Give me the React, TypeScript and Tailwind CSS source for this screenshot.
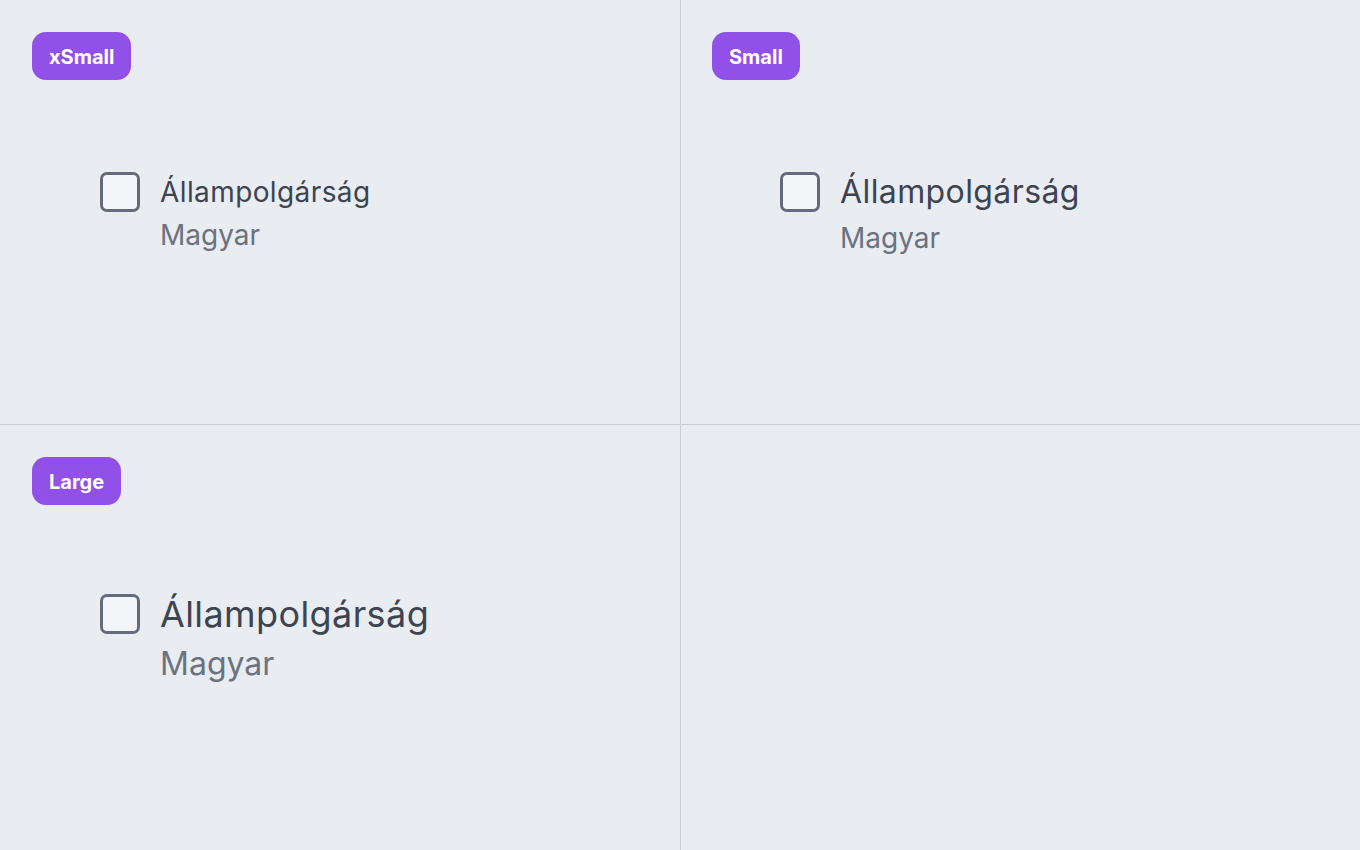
import React from 'react';

type Size = 'xSmall' | 'Small' | 'Large';

const sizes: Record<Size, { title: string; sub: string; gap: string; top: string }> = {
  xSmall: { title: 'text-[28px] leading-[40px]', sub: 'text-[28px] leading-[36px]', gap: 'mt-[5px]', top: 'mt-[92px]' },
  Small: { title: 'text-[32px] leading-[40px]', sub: 'text-[28px] leading-[36px]', gap: 'mt-[8px]', top: 'mt-[92px]' },
  Large: { title: 'text-[36px] leading-[40px]', sub: 'text-[32px] leading-[40px]', gap: 'mt-[10px]', top: 'mt-[89px]' },
};

function Badge({ label }: { label: string }) {
  return (
    <span className="inline-flex h-12 items-center rounded-[14px] bg-[#9150e8] px-[17px] pt-px text-[20px] font-bold text-white">
      {label}
    </span>
  );
}

function CheckItem({ size }: { size: Size }) {
  const s = sizes[size];
  return (
    <div className="flex items-start gap-5 pl-[68px]">
      <span className="h-10 w-10 shrink-0 rounded-[7px] border-[3px] border-[#646b7b] bg-[#f4f5f9]" />
      <div className="flex flex-col">
        <span className={`${s.title} tracking-[0.4px] text-[#3d4451]`}>Állampolgárság</span>
        <span className={`${s.gap} ${s.sub} text-[#6b7280]`}>Magyar</span>
      </div>
    </div>
  );
}

function Cell({ size, className }: { size?: Size; className: string }) {
  return (
    <div className={`py-8 ${className}`}>
      {size && (
        <>
          <Badge label={size} />
          <div className={sizes[size].top}>
            <CheckItem size={size} />
          </div>
        </>
      )}
    </div>
  );
}

export default function App() {
  return (
    <div
      className="grid h-[850px] w-[1360px] grid-cols-2 grid-rows-2 bg-[#e9ecf1]"
      style={{ fontFamily: 'Inter, "Noto Sans", sans-serif' }}
    >
      {/* top row */}
      <Cell size="xSmall" className="border-b border-[#cbced4] px-8" />
      <Cell size="Small" className="border-b border-l border-[#cbced4] pl-[31px] pr-8" />
      {/* bottom row */}
      <Cell size="Large" className="px-8" />
      <Cell className="border-l border-[#cbced4] pl-[31px] pr-8" />
    </div>
  );
}
